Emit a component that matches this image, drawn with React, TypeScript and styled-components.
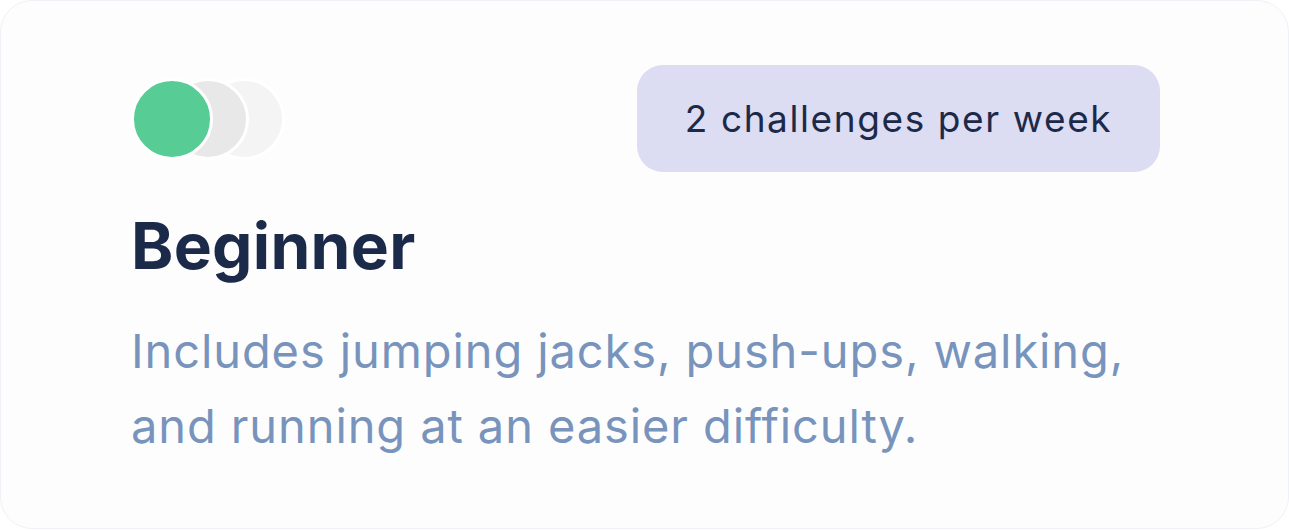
import React from "react";
import styled, { createGlobalStyle } from "styled-components";

const GlobalStyle = createGlobalStyle`
  html, body {
    margin: 0;
    padding: 0;
    background: #ffffff;
  }
  body {
    font-family: Inter, "Noto Sans", sans-serif;
  }
`;

type Level = "on" | "mid" | "off";

const levelColors: Record<Level, string> = {
  on: "#57cc94",
  mid: "#e8e8e8",
  off: "#f4f4f4",
};

const Card = styled.section`
  box-sizing: border-box;
  width: 1289px;
  height: 529px;
  padding: 64px 128px 0 130px;
  background: #fdfdfe;
  border: 1px solid #f0f0f7;
  border-radius: 32px;
`;

const Header = styled.div`
  display: flex;
  align-items: center;
  justify-content: space-between;
`;

const Dots = styled.div`
  display: flex;
  align-items: center;
`;

const Dot = styled.span<{ $level: Level; $layer: number }>`
  position: relative;
  z-index: ${(p) => p.$layer};
  box-sizing: border-box;
  width: 82px;
  height: 82px;
  border-radius: 50%;
  border: 3px solid #ffffff;
  background: ${(p) => levelColors[p.$level]};

  & + & {
    margin-left: -46px;
  }
`;

const Badge = styled.div`
  box-sizing: border-box;
  width: 523px;
  height: 107px;
  display: flex;
  align-items: center;
  justify-content: center;
  border-radius: 26px;
  background: #dcdcf2;
  color: #1c2a4a;
  font-size: 37px;
  font-weight: 400;
  letter-spacing: 1.6px;
`;

const Title = styled.h2`
  margin: 34px 0 0 0;
  color: #1c2a4a;
  font-size: 64px;
  font-weight: 700;
  line-height: 80px;
  letter-spacing: 0.3px;
`;

const Description = styled.p`
  margin: 27px 0 0 0;
  color: #7894bc;
  font-size: 47px;
  font-weight: 400;
  line-height: 75px;
  letter-spacing: 0.9px;
`;

const levels: Level[] = ["on", "mid", "off"];

export default function App() {
  return (
    <>
      <GlobalStyle />
      <Card>
        <Header>
          <Dots>
            {levels.map((level, i) => (
              <Dot key={i} $level={level} $layer={levels.length - i} />
            ))}
          </Dots>
          <Badge>2 challenges per week</Badge>
        </Header>
        <Title>Beginner</Title>
        <Description>
          Includes jumping jacks, push-ups, walking, and running at an easier
          difficulty.
        </Description>
      </Card>
    </>
  );
}
